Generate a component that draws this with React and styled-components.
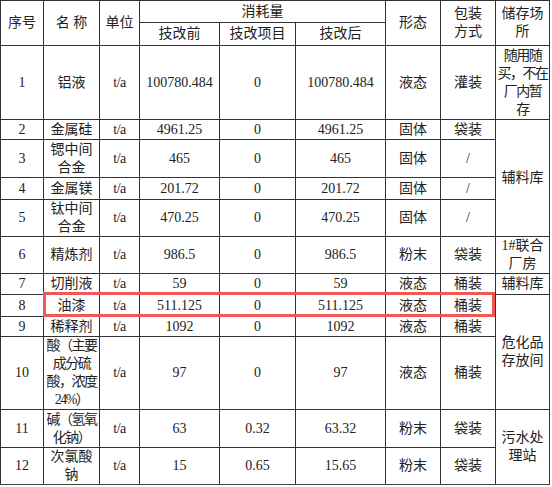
import React from 'react'
import styled, { createGlobalStyle } from 'styled-components'

const GlobalStyle = createGlobalStyle`
  html, body {
    margin: 0;
    padding: 0;
    background: #fff;
  }
`

// column widths taken from the grid lines
const cols = [43, 56, 40, 80, 76, 90, 55, 55, 54]

const rows = [
  { no: '1', name: '铝液', before: '100780.484', item: '0', after: '100780.484', form: '液态', pack: '灌装', h: 74 },
  { no: '2', name: '金属硅', before: '4961.25', item: '0', after: '4961.25', form: '固体', pack: '袋装', h: 20 },
  { no: '3', name: ['锶中间', '合金'], before: '465', item: '0', after: '465', form: '固体', pack: '/', h: 38 },
  { no: '4', name: '金属镁', before: '201.72', item: '0', after: '201.72', form: '固体', pack: '/', h: 22 },
  { no: '5', name: ['钛中间', '合金'], before: '470.25', item: '0', after: '470.25', form: '固体', pack: '/', h: 37 },
  { no: '6', name: '精炼剂', before: '986.5', item: '0', after: '986.5', form: '粉末', pack: '袋装', h: 37 },
  { no: '7', name: '切削液', before: '59', item: '0', after: '59', form: '液态', pack: '桶装', h: 21 },
  { no: '8', name: '油漆', before: '511.125', item: '0', after: '511.125', form: '液态', pack: '桶装', h: 22 },
  { no: '9', name: '稀释剂', before: '1092', item: '0', after: '1092', form: '液态', pack: '桶装', h: 20 },
  { no: '10', name: ['酸（主要', '成分硫', '酸，浓度', '24%）'], tight: true, before: '97', item: '0', after: '97', form: '液态', pack: '桶装', h: 73 },
  { no: '11', name: ['碱（氢氧', '化钠）'], tight: true, before: '63', item: '0.32', after: '63.32', form: '粉末', pack: '袋装', h: 38 },
  { no: '12', name: ['次氯酸', '钠'], before: '15', item: '0.65', after: '15.65', form: '粉末', pack: '袋装', h: 36 },
]

// storage place cells, keyed by the row where they start
const storage = {
  0: { span: 1, text: ['随用随', '买，不在', '厂内暂', '存'], tight: true },
  1: { span: 4, text: ['辅料库'] },
  5: { span: 1, text: ['1#联合', '厂房'] },
  6: { span: 1, text: ['辅料库'] },
  7: { span: 3, text: ['危化品', '存放间'] },
  10: { span: 2, text: ['污水处', '理站'] },
}

const Lines = ({ text }) => {
  const list = Array.isArray(text) ? text : [text]
  return list.map((t, i) => (
    <React.Fragment key={i}>
      {i > 0 && <br />}
      {t}
    </React.Fragment>
  ))
}

const App = () => {
  return (
    <Wrapper>
      <GlobalStyle />
      <Table>
        <colgroup>
          {cols.map((w, i) => (
            <col key={i} style={{ width: w }} />
          ))}
        </colgroup>
        <thead>
          <Row $h={22}>
            <Cell rowSpan={2}>序号</Cell>
            <Cell rowSpan={2}>名 称</Cell>
            <Cell rowSpan={2}>单位</Cell>
            <Cell colSpan={3}>消耗量</Cell>
            <Cell rowSpan={2}>形态</Cell>
            <Cell rowSpan={2}>
              <Lines text={['包装', '方式']} />
            </Cell>
            <Cell rowSpan={2}>
              <Lines text={['储存场', '所']} />
            </Cell>
          </Row>
          <Row $h={23}>
            <Cell>技改前</Cell>
            <Cell>技改项目</Cell>
            <Cell>技改后</Cell>
          </Row>
        </thead>
        <tbody>
          {rows.map((r, i) => (
            <Row key={r.no} $h={r.h}>
              <Cell>{r.no}</Cell>
              <Cell $tight={r.tight}>
                <Lines text={r.name} />
              </Cell>
              <Cell $unit>t/a</Cell>
              <Cell>{r.before}</Cell>
              <Cell>{r.item}</Cell>
              <Cell>{r.after}</Cell>
              <Cell>{r.form}</Cell>
              <Cell>{r.pack}</Cell>
              {storage[i] && (
                <Cell rowSpan={storage[i].span} $tight={storage[i].tight}>
                  <Lines text={storage[i].text} />
                </Cell>
              )}
            </Row>
          ))}
        </tbody>
      </Table>
      {/* red highlight over the 油漆 row */}
      <Highlight />
    </Wrapper>
  )
}

const Wrapper = styled.main`
  position: relative;
  width: 552px;
  height: 487px;
  background: #fff;
`

const Table = styled.table`
  border-collapse: collapse;
  table-layout: fixed;
  width: 549px;
  border-bottom: 4px double #444;
  font-family: 'Liberation Serif', 'Noto Sans CJK SC', serif;
  font-size: 14px;
  color: #222;
`

const Row = styled.tr`
  height: ${(p) => p.$h}px;
`

const Cell = styled.td`
  border: 1px solid #333;
  padding: 0;
  text-align: center;
  vertical-align: middle;
  line-height: 18px;
  white-space: nowrap;
  overflow: hidden;
  letter-spacing: ${(p) => (p.$tight ? '-1.5px' : '0')};
  ${(p) => p.$unit && 'letter-spacing: -0.5px;'}
`

const Highlight = styled.div`
  position: absolute;
  left: 43px;
  top: 292px;
  width: 452px;
  height: 25px;
  box-sizing: border-box;
  border: 3px solid #f25757;
  pointer-events: none;
`

export default App
